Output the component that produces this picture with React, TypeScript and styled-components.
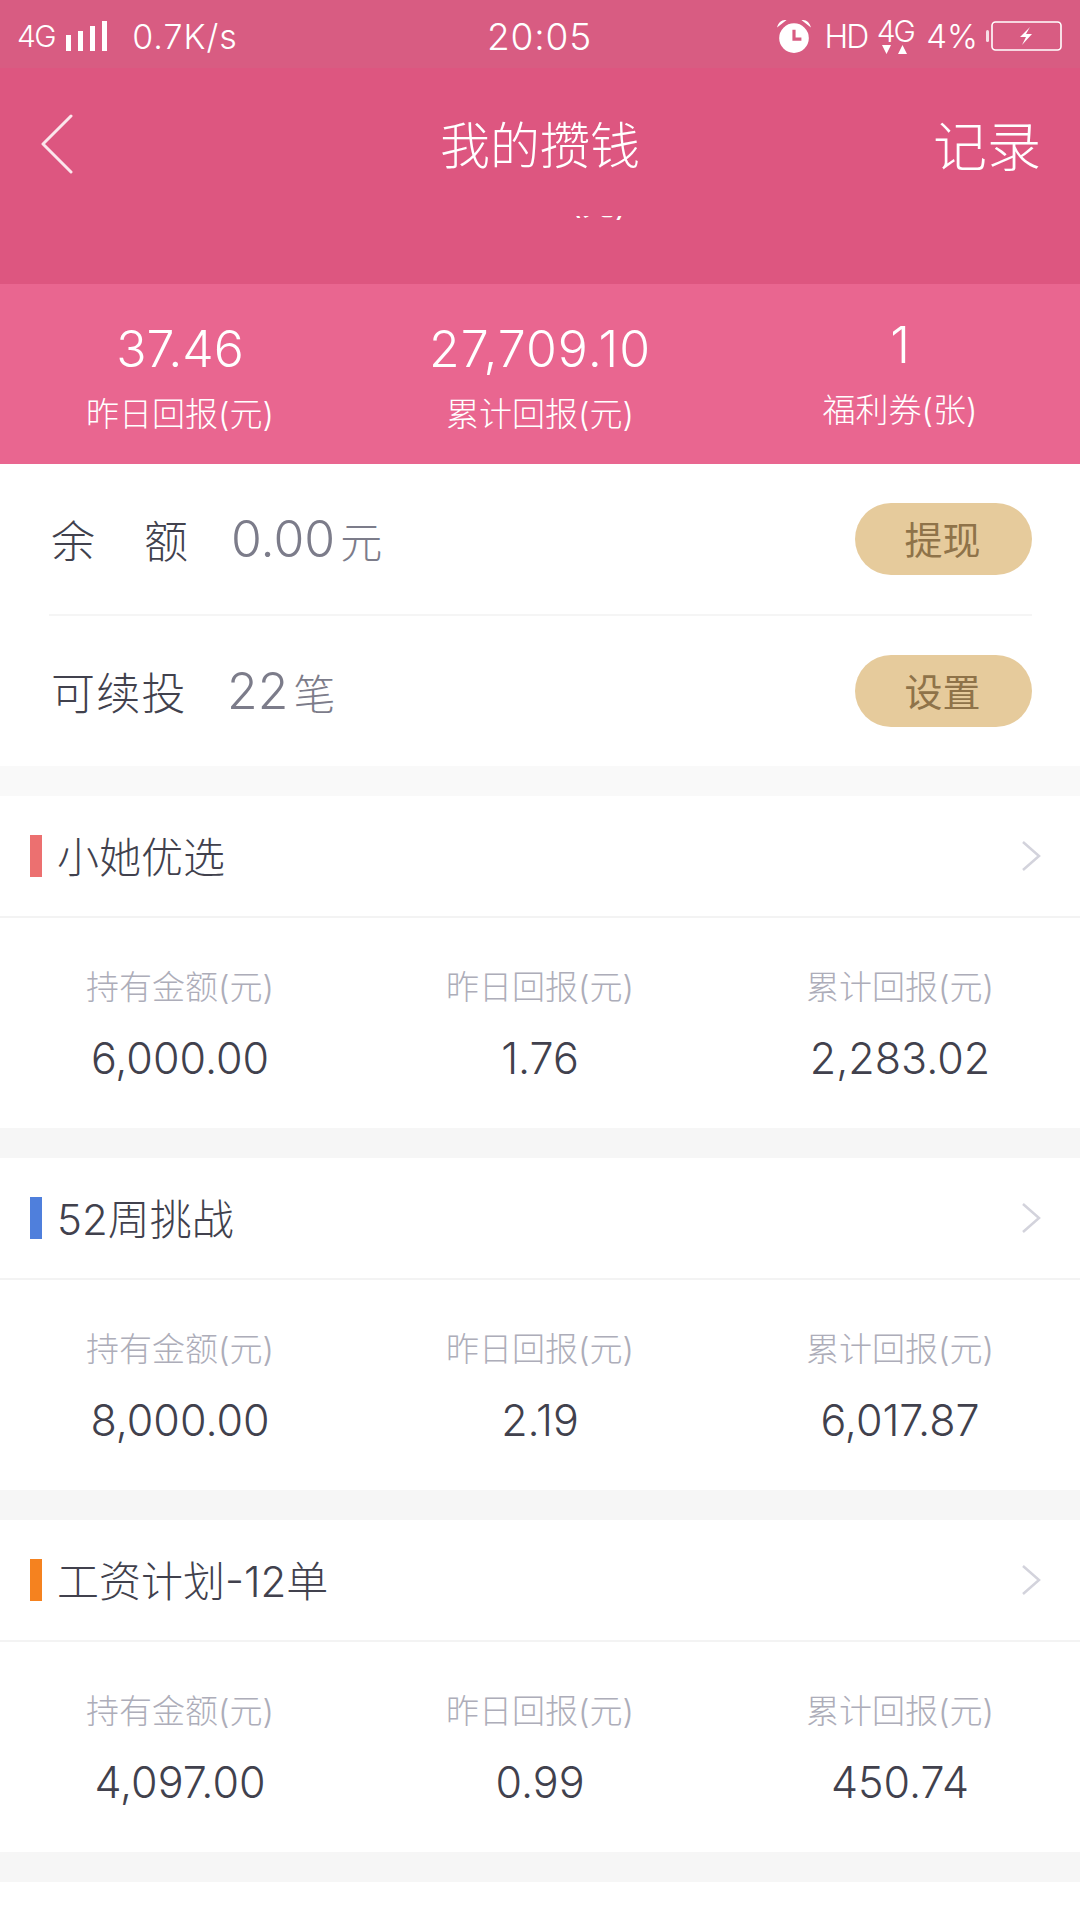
import styled, { createGlobalStyle } from "styled-components";

const cjk = `"Noto Sans CJK SC", sans-serif`;
const mixed = `Inter, "Noto Sans CJK SC", sans-serif`;

const GlobalStyle = createGlobalStyle`
  html, body {
    margin: 0;
    padding: 0;
    background: #fff;
  }
  * {
    box-sizing: border-box;
  }
`;

const Page = styled.div`
  width: 1080px;
  height: 1920px;
  overflow: hidden;
  background: #fff;
  font-family: ${mixed};
`;

const StatusBar = styled.div`
  height: 68px;
  padding: 4px 18px 0 17px;
  background: #d85c82;
  color: #fff;
  display: grid;
  grid-template-columns: 1fr auto 1fr;
  align-items: center;
`;

const StatusLeft = styled.div`
  display: flex;
  align-items: center;
  font-weight: 300;
`;

const StatusRight = styled.div`
  display: flex;
  align-items: center;
  justify-content: flex-end;
  font-weight: 300;
`;

const NetLabel = styled.span`
  font-size: 30px;
  letter-spacing: -1.5px;
  margin-right: 11px;
`;

const Speed = styled.span`
  margin-left: 24px;
  font-size: 34px;
  letter-spacing: 1px;
`;

const Clock = styled.div`
  font-size: 37px;
  font-weight: 300;
  letter-spacing: 0.8px;
`;

const Hd = styled.span`
  font-size: 32px;
  letter-spacing: -2px;
  margin: 0 9px 0 13px;
`;

const NetStack = styled.span`
  display: flex;
  flex-direction: column;
  align-items: center;
  width: 38px;
`;

const NetStackLabel = styled.span`
  font-size: 30px;
  line-height: 27px;
  letter-spacing: -2px;
`;

const Percent = styled.span`
  font-size: 33px;
  margin: 0 8px 0 12px;
`;

const Header = styled.header`
  height: 216px;
  background: #dd5680;
  color: #fff;
  display: flex;
  flex-direction: column;
`;

const NavRow = styled.div`
  height: 148px;
  padding: 0 39px 0 41px;
  display: flex;
  align-items: center;
  justify-content: space-between;
  position: relative;
`;

const BackButton = styled.span`
  display: flex;
  margin-top: 3px;
`;

const Title = styled.h1`
  position: absolute;
  left: 0;
  right: 0;
  margin: 0;
  text-align: center;
  font-size: 50px;
  font-weight: 300;
  font-family: ${cjk};
  line-height: 1;
`;

const NavAction = styled.span`
  margin-top: 3px;
  font-size: 54px;
  font-weight: 300;
  font-family: ${cjk};
  line-height: 1;
`;

const ClippedLine = styled.div`
  height: 6px;
  overflow: hidden;
  display: flex;
  justify-content: center;
  align-items: flex-end;
  font-size: 33px;
  line-height: 37px;
  color: #fff;
  white-space: nowrap;
`;

const StatsStrip = styled.div`
  height: 180px;
  background: #e96690;
  color: #fff;
  display: grid;
  grid-template-columns: repeat(3, 1fr);
  text-align: center;
  font-weight: 300;
`;

const StatCell = styled.div<{ $top: number }>`
  display: flex;
  flex-direction: column;
  align-items: center;
  justify-content: center;
  gap: 18px;
  padding-top: ${(p) => p.$top}px;
`;

const StatValue = styled.div<{ $spread?: number }>`
  font-size: 50px;
  line-height: 52px;
  letter-spacing: ${(p) => p.$spread || 0}px;
`;

const StatLabel = styled.div`
  font-size: 33px;
  line-height: 42px;
`;

const Balance = styled.section`
  padding: 0 48px 0 49px;
  height: 302px;
`;

const BalanceRow = styled.div<{ $divided?: boolean }>`
  height: ${(p) => (p.$divided ? 152 : 150)}px;
  padding-left: 2px;
  display: flex;
  align-items: center;
  justify-content: space-between;
  border-bottom: ${(p) => (p.$divided ? "2px solid #f5f5f5" : "none")};
`;

const BalanceInfo = styled.div`
  display: flex;
  align-items: center;
`;

const BalanceLabel = styled.span<{ $width: number; $spread?: number }>`
  width: ${(p) => p.$width}px;
  font-size: 44px;
  font-weight: 300;
  color: #41414d;
  font-family: ${cjk};
  letter-spacing: ${(p) => p.$spread || 0}px;
  white-space: nowrap;
`;

const BalanceValue = styled.span`
  font-size: 50px;
  font-weight: 300;
  color: #7c7c8a;
`;

const BalanceUnit = styled.span`
  font-size: 42px;
  font-weight: 300;
  color: #7c7c8a;
  margin-left: 5px;
  font-family: ${cjk};
`;

const PillButton = styled.button`
  width: 177px;
  height: 72px;
  border: none;
  border-radius: 36px;
  background: #e6cb9c;
  color: #8f7349;
  font-size: 38px;
  font-weight: 400;
  font-family: ${cjk};
  padding: 0 2px 3px 0;
`;

const Gap = styled.div<{ $tone?: string }>`
  height: 30px;
  background: ${(p) => p.$tone || "#f6f6f6"};
`;

const SectionHead = styled.div`
  height: 122px;
  padding: 0 39px 0 30px;
  display: flex;
  align-items: center;
  border-bottom: 2px solid #f3f3f3;
`;

const Marker = styled.span<{ $color: string }>`
  width: 12px;
  height: 42px;
  background: ${(p) => p.$color};
  margin-right: 15px;
`;

const SectionTitle = styled.span`
  flex: 1;
  padding-bottom: 3px;
  font-size: 42px;
  font-weight: 300;
  color: #41414d;
`;

const SectionBody = styled.div`
  height: 210px;
  display: grid;
  grid-template-columns: repeat(3, 1fr);
  text-align: center;
`;

const Metric = styled.div`
  display: flex;
  flex-direction: column;
  align-items: center;
  padding-top: 47px;
`;

const MetricLabel = styled.div`
  font-size: 33px;
  line-height: 44px;
  font-weight: 300;
  color: #adadb9;
`;

const MetricValue = styled.div`
  margin-top: 24px;
  font-size: 43px;
  line-height: 50px;
  font-weight: 300;
  color: #41414d;
`;

const BackIcon = () => (
  <svg width="32" height="60" viewBox="0 0 32 60" fill="none">
    <path d="M30 2 L2 30 L30 58" stroke="#fbe6ec" strokeWidth="3" strokeLinecap="round" strokeLinejoin="round" />
  </svg>
);

const RightChevron = () => (
  <svg width="20" height="32" viewBox="0 0 20 32" fill="none">
    <path d="M2 2 L18 16 L2 30" stroke="#d3d3dc" strokeWidth="2.5" />
  </svg>
);

const SignalIcon = () => (
  <svg width="42" height="34" viewBox="0 0 42 34" fill="#fff">
    <rect x="0" y="16" width="5" height="16" />
    <rect x="12" y="12" width="5" height="20" />
    <rect x="24" y="7" width="5" height="25" />
    <rect x="36" y="2" width="5" height="30" />
  </svg>
);

const AlarmIcon = () => (
  <svg width="36" height="36" viewBox="0 0 34 34">
    <circle cx="17" cy="19" r="14" fill="#fff" />
    <path d="M1 9 C2 4 6 1 10 2 Z M33 9 C32 4 28 1 24 2 Z" fill="#fff" />
    <path d="M17 11 V20 H24" stroke="#d85c82" strokeWidth="3" fill="none" />
  </svg>
);

const TrafficArrows = () => (
  <svg width="26" height="10" viewBox="0 0 26 10" fill="#fff">
    <path d="M0 0 H9 L4.5 9 Z M16 9 H25 L20.5 0 Z" />
  </svg>
);

const BatteryIcon = () => (
  <svg width="76" height="32" viewBox="0 0 76 32" fill="none">
    <rect x="0" y="10" width="3" height="12" rx="1.5" fill="#fff" opacity="0.8" />
    <rect x="6" y="2" width="69" height="28" rx="3.5" stroke="#fff" strokeWidth="1.6" />
    <path d="M44 7 L34 17 H40 L36 25 L46 14 H40 Z" fill="#fff" />
  </svg>
);

const groups = [
  { name: "小她优选", color: "#ec7070", held: "6,000.00", yesterday: "1.76", total: "2,283.02" },
  { name: "52周挑战", color: "#4f7fdc", held: "8,000.00", yesterday: "2.19", total: "6,017.87" },
  { name: "工资计划-12单", color: "#f5821f", held: "4,097.00", yesterday: "0.99", total: "450.74" },
];

const App = () => {
  return (
    <Page>
      <GlobalStyle />
      <StatusBar>
        <StatusLeft>
          <NetLabel>4G</NetLabel>
          <SignalIcon />
          <Speed>0.7K/s</Speed>
        </StatusLeft>
        <Clock>20:05</Clock>
        <StatusRight>
          <AlarmIcon />
          <Hd>HD</Hd>
          <NetStack>
            <NetStackLabel>4G</NetStackLabel>
            <TrafficArrows />
          </NetStack>
          <Percent>4%</Percent>
          <BatteryIcon />
        </StatusRight>
      </StatusBar>

      <Header>
        <NavRow>
          <BackButton>
            <BackIcon />
          </BackButton>
          <Title>我的攒钱</Title>
          <NavAction>记录</NavAction>
        </NavRow>
        <ClippedLine>2018-11(元)</ClippedLine>
      </Header>

      <StatsStrip>
        <StatCell $top={9}>
          <StatValue>37.46</StatValue>
          <StatLabel>昨日回报(元)</StatLabel>
        </StatCell>
        <StatCell $top={9}>
          <StatValue $spread={1}>27,709.10</StatValue>
          <StatLabel>累计回报(元)</StatLabel>
        </StatCell>
        <StatCell $top={1}>
          <StatValue>1</StatValue>
          <StatLabel>福利券(张)</StatLabel>
        </StatCell>
      </StatsStrip>

      <Balance>
        <BalanceRow $divided>
          <BalanceInfo>
            <BalanceLabel $width={180} $spread={49}>余额</BalanceLabel>
            <BalanceValue>0.00</BalanceValue>
            <BalanceUnit>元</BalanceUnit>
          </BalanceInfo>
          <PillButton>提现</PillButton>
        </BalanceRow>
        <BalanceRow>
          <BalanceInfo>
            <BalanceLabel $width={176} $spread={1.2}>可续投</BalanceLabel>
            <BalanceValue>22</BalanceValue>
            <BalanceUnit>笔</BalanceUnit>
          </BalanceInfo>
          <PillButton>设置</PillButton>
        </BalanceRow>
      </Balance>
      <Gap $tone="#f9f9f9" />

      {groups.map((g) => (
        <section key={g.name}>
          <SectionHead>
            <Marker $color={g.color} />
            <SectionTitle>{g.name}</SectionTitle>
            <RightChevron />
          </SectionHead>
          <SectionBody>
            <Metric>
              <MetricLabel>持有金额(元)</MetricLabel>
              <MetricValue>{g.held}</MetricValue>
            </Metric>
            <Metric>
              <MetricLabel>昨日回报(元)</MetricLabel>
              <MetricValue>{g.yesterday}</MetricValue>
            </Metric>
            <Metric>
              <MetricLabel>累计回报(元)</MetricLabel>
              <MetricValue>{g.total}</MetricValue>
            </Metric>
          </SectionBody>
          <Gap />
        </section>
      ))}
    </Page>
  );
};

export default App;
